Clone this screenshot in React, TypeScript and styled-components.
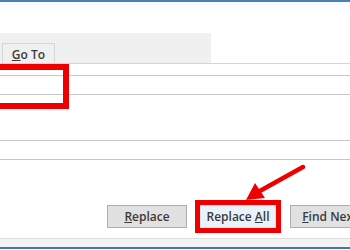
import React from 'react';
import styled, { createGlobalStyle } from 'styled-components';

const GlobalStyle = createGlobalStyle`
  html, body {
    margin: 0;
    padding: 0;
    background: #ffffff;
  }
  body {
    font-family: 'Open Sans', 'Liberation Sans', sans-serif;
  }
`;

const Dialog = styled.div`
  position: relative;
  width: 350px;
  height: 250px;
  overflow: hidden;
  display: flex;
  flex-direction: column;
  background: #ffffff;
`;

const TitleEdge = styled.div`
  height: 2px;
  background: #4a80ba;
`;

const TitleSpace = styled.div`
  height: 31px;
  background: linear-gradient(#f7fafd, #ffffff 40%);
`;

const TabStrip = styled.div`
  display: flex;
  height: 30px;
  border-bottom: 1px solid #d4d4d4;
`;

const TabArea = styled.div`
  width: 211px;
  background: #f0f0f0;
  display: flex;
  align-items: flex-end;
  padding-left: 2px;
  box-sizing: border-box;
  border-left: 0;
`;

const Tab = styled.div`
  width: 53px;
  height: 20px;
  box-sizing: border-box;
  border: 1px solid #d6d6d6;
  border-bottom: none;
  background: #f0f0f0;
  display: flex;
  align-items: center;
  justify-content: center;
  font-size: 12px;
  font-weight: 600;
  color: #3a3a3a;
  padding-top: 1px;
`;

const Content = styled.div`
  display: flex;
  flex-direction: column;
  padding-top: 11px;
  flex: 1;
`;

const Field = styled.div<{ $top?: number }>`
  margin-left: -10px;
  width: 380px;
  height: 20px;
  box-sizing: border-box;
  margin-top: ${(p) => p.$top ?? 0}px;
  border-top: 1px solid #c6c6c6;
  border-bottom: 1px solid #c6c6c6;
  background: #ffffff;
`;

const ButtonRow = styled.div`
  display: flex;
  align-items: center;
  gap: 8px;
  padding-left: 107px;
  margin-top: 40px;
  height: 33px;
`;

const Button = styled.div<{ $primary?: boolean }>`
  flex: none;
  width: ${(p) => (p.$primary ? 76 : 80)}px;
  height: 23px;
  box-sizing: border-box;
  border: 1px solid ${(p) => (p.$primary ? '#d3e3f2' : '#adadad')};
  background: ${(p) => (p.$primary ? '#eaf2fa' : '#e1e1e1')};
  display: flex;
  align-items: center;
  justify-content: center;
  font-size: 12px;
  font-weight: 600;
  color: #3a3a3a;
  white-space: nowrap;
`;

const Highlight = styled.div`
  flex: none;
  border: 5px solid #ee0000;
`;

const NextButton = styled(Button)`
  margin-left: 1px;
`;

const Footer = styled.div`
  margin-top: 5px;
  height: 8px;
  border-top: 1px solid #dedede;
  border-bottom: 2px solid #3d78b6;
  background: #f3f3f3;
`;

const FieldMark = styled.div`
  position: absolute;
  left: -10px;
  top: 64px;
  width: 79px;
  height: 45px;
  box-sizing: border-box;
  border: 6px solid #ee0000;
`;

const Arrow = styled.svg`
  position: absolute;
  left: 0;
  top: 0;
  pointer-events: none;
`;

const App: React.FC = () => {
  return (
    <Dialog>
      <GlobalStyle />
      <TitleEdge />
      <TitleSpace />
      <TabStrip>
        <TabArea>
          <Tab>
            <span>
              <u>G</u>o To
            </span>
          </Tab>
        </TabArea>
      </TabStrip>
      <Content>
        <Field />
        <Field $top={45} />
        <ButtonRow>
          <Button>
            <span>
              <u>R</u>eplace
            </span>
          </Button>
          <Highlight>
            <Button $primary>
              <span>
                Replace <u>A</u>ll
              </span>
            </Button>
          </Highlight>
          <NextButton>
            <span>
              <u>F</u>ind Next
            </span>
          </NextButton>
        </ButtonRow>
        <Footer />
      </Content>
      <FieldMark />
      <Arrow width="350" height="250" viewBox="0 0 350 250">
        <line x1="303" y1="167" x2="258" y2="192" stroke="#ee0000" strokeWidth="4.5" strokeLinecap="round" />
        <polygon points="246,200 255,183 265,198" fill="#ee0000" />
      </Arrow>
    </Dialog>
  );
};

export default App;
